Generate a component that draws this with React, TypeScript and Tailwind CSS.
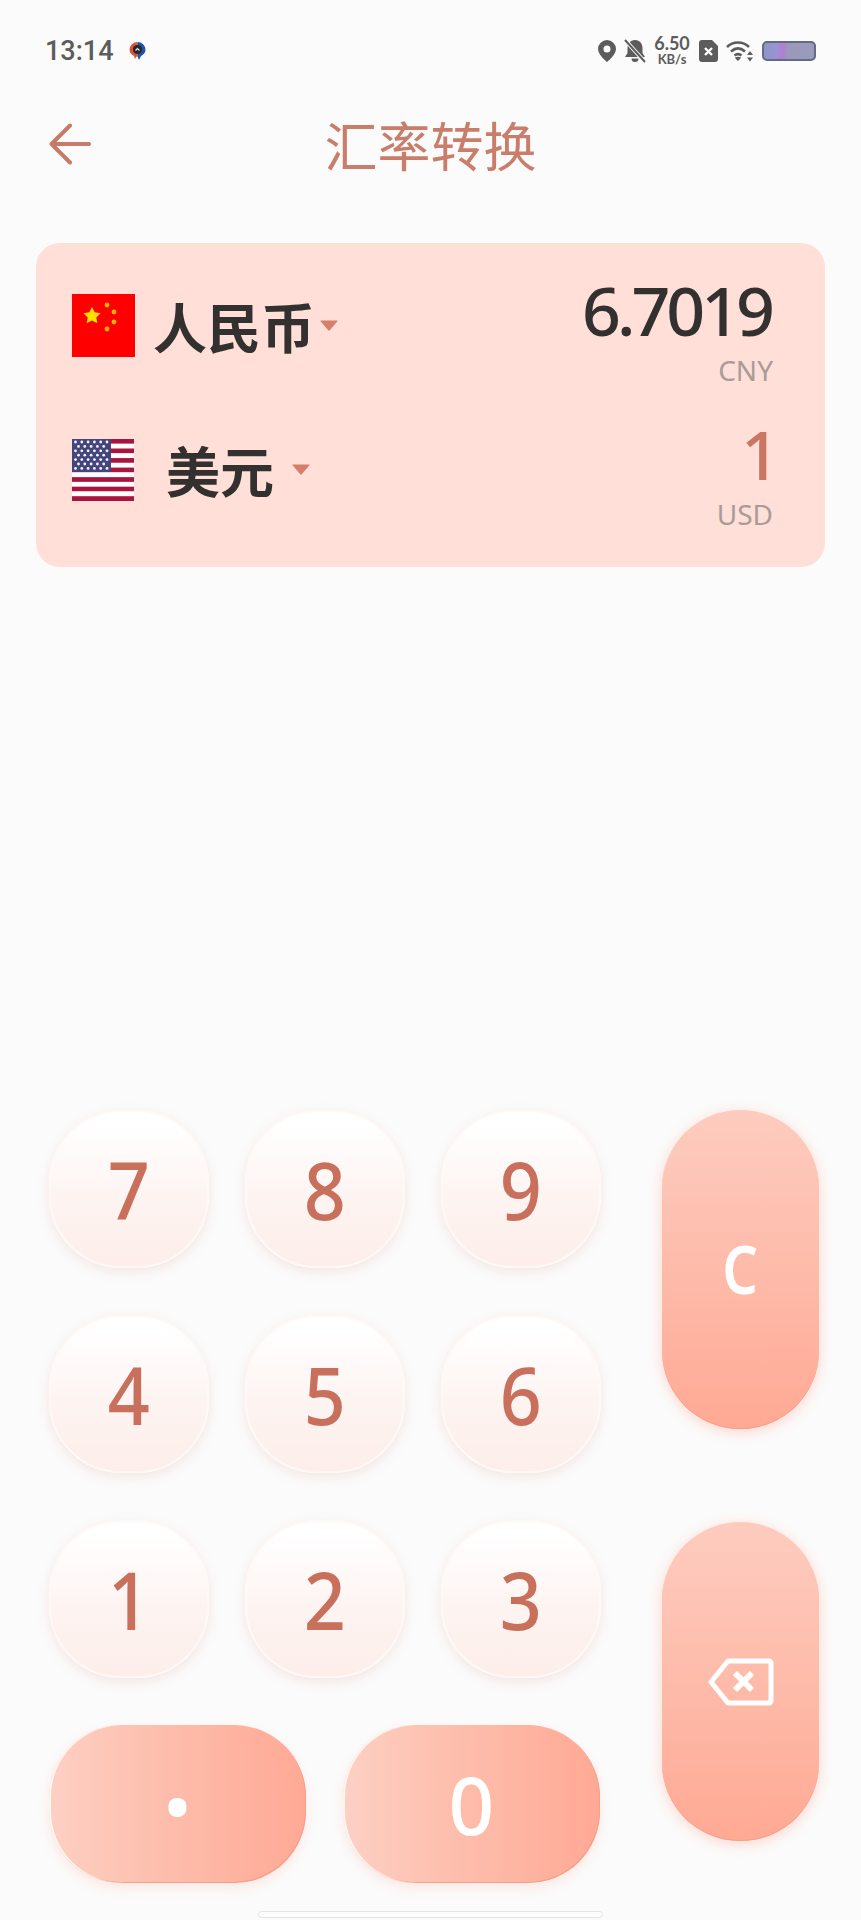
const cjk = "font-['Noto_Sans_CJK_SC','Noto_Sans',sans-serif]";

function ChinaFlag() {
  const star = "M0,-1 L0.294,-0.405 L0.951,-0.309 L0.476,0.155 L0.588,0.809 L0,0.5 L-0.588,0.809 L-0.476,0.155 L-0.951,-0.309 L-0.294,-0.405 Z";
  return (
    <svg width="63" height="63" viewBox="0 0 63 63" className="shrink-0">
      <rect width="63" height="63" fill="#fe0000" />
      <path d={star} transform="translate(20 22) scale(9)" fill="#ffe000" />
      <circle cx="35" cy="11" r="2.4" fill="#f7b500" />
      <circle cx="42" cy="18" r="2.4" fill="#f7b500" />
      <circle cx="42" cy="28" r="2.4" fill="#f7b500" />
      <circle cx="35" cy="35" r="2.4" fill="#f7b500" />
    </svg>
  );
}

function UsFlag() {
  const stripes = Array.from({ length: 13 }, (_, i) => i);
  const stars: [number, number][] = [];
  for (let r = 0; r < 7; r++) {
    for (let c = 0; c < (r % 2 ? 5 : 6); c++) {
      stars.push([(r % 2 ? 6.5 : 3.5) + c * 6.3, 3 + r * 4.4]);
    }
  }
  return (
    <svg width="62" height="62" viewBox="0 0 62 62" className="shrink-0">
      {stripes.map((i) => (
        <rect key={i} y={i * (62 / 13)} width="62" height={62 / 13} fill={i % 2 ? "#ffffff" : "#a91540"} />
      ))}
      <rect width="39" height="33" fill="#45457e" />
      {stars.map(([x, y], i) => (
        <circle key={i} cx={x} cy={y} r="1.4" fill="#f4f4fa" />
      ))}
    </svg>
  );
}

function Caret() {
  return (
    <svg width="18" height="11" viewBox="0 0 18 11" className="shrink-0 block">
      <path d="M1 0.5 H17 Q18 0.5 17.2 1.5 L10 10 Q9 11 8 10 L0.8 1.5 Q0 0.5 1 0.5 Z" fill="#d67f68" />
    </svg>
  );
}

function StatusBar() {
  return (
    <div className="h-[100px] pl-[45px] pr-[45px] flex items-center justify-between text-[#5c5c5c]">
      <div className="flex items-center gap-[15px] translate-y-[1px]">
        <span className="font-['Roboto',sans-serif] font-medium text-[27px] leading-[28px]">13:14</span>
        <svg width="17" height="18" viewBox="0 0 17 18">
          <path d="M8.5 0 A8 8 0 0 0 0.5 8 C0.5 11 3 13 5 14 L6 17 L7.5 14.5 L8.5 14.5 Z" fill="#d5573a" />
          <path d="M8.5 0 A8 8 0 0 1 16.5 8 C16.5 11 14 13 12 14 L10 18 L8.5 14.5 Z" fill="#1e55a8" />
          <circle cx="8.5" cy="7.5" r="4.6" fill="#2b2426" />
          <path d="M6.5 8.5 L8.5 6.5 L10.5 8.5" stroke="#e8e8e8" strokeWidth="1.2" fill="none" />
        </svg>
      </div>
      <div className="flex items-center translate-y-[1px]">
        <svg width="18" height="22" viewBox="0 0 18 22">
          <path fillRule="evenodd" d="M9 0 A9 9 0 0 0 0 9 C0 15 9 22 9 22 C9 22 18 15 18 9 A9 9 0 0 0 9 0 Z M9 5.5 A3.5 3.5 0 1 1 9 12.5 A3.5 3.5 0 0 1 9 5.5 Z" fill="#5c5c5c" />
        </svg>
        <svg width="22" height="24" viewBox="0 0 22 24" className="ml-[8px]">
          <path d="M11 1 C6 1 3.5 5 3.5 9 V14 L1 18 H21 L18.5 14 V9 C18.5 5 16 1 11 1 Z M7.5 19.5 H14.5 A3.5 3.5 0 0 1 7.5 19.5 Z" fill="#5c5c5c" />
          <path d="M1 1 L21 23" stroke="#fbfbfb" strokeWidth="4" />
          <path d="M1 1 L21 23" stroke="#5c5c5c" strokeWidth="2" />
        </svg>
        <div className="ml-[8px] w-[36px] flex flex-col items-center font-['Lato',sans-serif] font-bold">
          <span className="text-[18px] leading-[15px]">6.50</span>
          <span className="mt-[2px] text-[13px] leading-[13px]">KB/s</span>
        </div>
        <svg width="19" height="22" viewBox="0 0 19 22" className="ml-[9px]">
          <path d="M3 0 H13 L19 6 V19 A3 3 0 0 1 16 22 H3 A3 3 0 0 1 0 19 V3 A3 3 0 0 1 3 0 Z" fill="#5c5c5c" />
          <path d="M6 8 L13 15 M13 8 L6 15" stroke="#ffffff" strokeWidth="2.4" />
        </svg>
        <svg width="28" height="22" viewBox="0 0 28 22" className="ml-[8px]">
          <path d="M1 7 C7 1 17 1 23 7" stroke="#5c5c5c" strokeWidth="2.6" fill="none" />
          <path d="M5 11.5 C9.5 7.5 14.5 7.5 19 11.5" stroke="#5c5c5c" strokeWidth="2.6" fill="none" />
          <path d="M8.5 15.5 C11 13.5 13 13.5 15.5 15.5" stroke="#5c5c5c" strokeWidth="2.6" fill="none" />
          <path d="M12 21 L8.8 17.8 C11 16.3 13 16.3 15.2 17.8 Z" fill="#5c5c5c" />
          <path d="M24 11 L27 15 H21 Z M24 21.5 L21 17.5 H27 Z" fill="#5c5c5c" />
        </svg>
        <div className="ml-[8px] w-[54px] h-[20px] rounded-[5px] border-[2px] border-[#646a86] bg-[linear-gradient(90deg,#8d96c4_0%,#9b92d4_25%,#b07fd2_36%,#9c98bc_48%,#989cba_100%)]" />
      </div>
    </div>
  );
}

function Header() {
  return (
    <div className="relative h-[77px] mt-[6px] flex items-center justify-center">
      <svg width="42" height="42" viewBox="0 0 42 42" className="absolute left-[49px] top-[17px]">
        <path d="M40 21 H2.5 M21 2.5 L2.5 21 L21 39.5" stroke="#c87a68" strokeWidth="4" strokeLinecap="round" strokeLinejoin="round" fill="none" />
      </svg>
      <h1 className={`${cjk} text-[53px] leading-[77px] font-normal text-[#c97d6b]`}>汇率转换</h1>
    </div>
  );
}

function CurrencyRow({
  flag,
  name,
  value,
  code,
  nameClass,
  caretClass,
  valueClass,
}: {
  flag: React.ReactNode;
  name: string;
  value: string;
  code: string;
  nameClass: string;
  caretClass: string;
  valueClass: string;
}) {
  return (
    <div className="h-[144px] flex items-start justify-between">
      <div className="mt-[20px] flex items-center">
        {flag}
        <span className={`${cjk} ${nameClass} text-[54px] leading-[63px] font-bold text-[#333030]`}>{name}</span>
        <span className={caretClass}>
          <Caret />
        </span>
      </div>
      <div className="flex flex-col items-end">
        <span className={`font-['Noto_Sans',sans-serif] font-medium tracking-[-4px] text-[68px] leading-[72px] ${valueClass}`}>{value}</span>
        <span className="mt-[6px] font-['Noto_Sans',sans-serif] text-[28px] leading-[36px] text-[#a89c97]">{code}</span>
      </div>
    </div>
  );
}

function NumKey({ label }: { label: string }) {
  return (
    <button className="w-[160px] h-[158px] rounded-[72px] border-[2px] border-[#fff8f5] bg-[linear-gradient(180deg,#ffffff_8%,#fdf3f0_60%,#fdeeea_100%)] shadow-[0_4px_12px_rgba(226,180,168,0.28)] flex items-center justify-center font-['Noto_Sans',sans-serif] font-medium text-[80px] leading-none text-[#c8705c]">
      <span className="scale-x-[0.92]">{label}</span>
    </button>
  );
}

function WideKey({ label, className }: { label: string; className: string }) {
  return (
    <button className={`${className} h-[158px] rounded-[72px] bg-[linear-gradient(90deg,#fdd0c4_0%,#fdbfae_40%,#ffa995_100%)] shadow-[inset_2px_0_0_#fff5f0,inset_-1px_-1px_0_#f5a08a,0_5px_12px_rgba(255,170,150,0.22)] flex items-center justify-center font-['Noto_Sans',sans-serif] font-medium leading-none text-white`}>
      {label}
    </button>
  );
}

function TallKey({ children }: { children: React.ReactNode }) {
  return (
    <button className="w-[157px] h-[319px] rounded-[78px] bg-[linear-gradient(180deg,#fdccbf_0%,#febbaa_50%,#ffa994_100%)] shadow-[inset_0_-1px_0_#f5a08a,0_3px_14px_rgba(255,160,135,0.4)] flex items-center justify-center text-white">
      {children}
    </button>
  );
}

export default function App() {
  const digits = ["7", "8", "9", "4", "5", "6", "1", "2", "3"];
  return (
    <div className="relative w-[861px] h-[1920px] bg-[#fbfbfb] overflow-hidden flex flex-col">
      <StatusBar />
      <Header />

      <div className="mx-[36px] mt-[60px] h-[324px] pt-[31px] pl-[36px] pr-[52px] rounded-[24px] bg-[#ffdfd8] w-[789px]">
        <CurrencyRow
          flag={<ChinaFlag />}
          name="人民币"
          value="6.7019"
          code="CNY"
          nameClass="ml-[18px]"
          caretClass="ml-[5px] -mt-[1px]"
          valueClass="text-[#333030] -translate-x-[2px]"
        />
        <CurrencyRow
          flag={<UsFlag />}
          name="美元"
          value="1"
          code="USD"
          nameClass="ml-[32px]"
          caretClass="ml-[18px] -mt-[1px]"
          valueClass="text-[#c97663] translate-x-[3px]"
        />
      </div>

      <div className="mt-[543px] pl-[49px] flex">
        <div className="w-[552px] flex flex-col gap-[47px]">
          <div className="grid grid-cols-3 gap-x-[36px] gap-y-[47px]">
            {digits.map((d) => (
              <NumKey key={d} label={d} />
            ))}
          </div>
          <div className="flex gap-[37px]">
            <WideKey label="·" className="w-[257px] text-[130px]" />
            <WideKey label="0" className="w-[257px] text-[80px]" />
          </div>
        </div>
        <div className="ml-[61px] flex flex-col gap-[93px]">
          <TallKey>
            <span className="font-['Noto_Sans',sans-serif] font-semibold text-[66px] leading-none scale-x-[0.85] -translate-y-[2px]">C</span>
          </TallKey>
          <TallKey>
            <svg width="66" height="48" viewBox="0 0 66 48">
              <path d="M20 3 H61 A2 2 0 0 1 63 5 V43 A2 2 0 0 1 61 45 H20 L3 24 Z" stroke="#ffffff" strokeWidth="5" strokeLinejoin="round" fill="none" />
              <path d="M27 15 L44 32 M44 15 L27 32" stroke="#ffffff" strokeWidth="6" />
            </svg>
          </TallKey>
        </div>
      </div>

      <div className="absolute left-[258px] top-[1911px] w-[345px] h-[7px] rounded-full border border-[#e4e4e4] bg-[#fdfdfd]" />
    </div>
  );
}
